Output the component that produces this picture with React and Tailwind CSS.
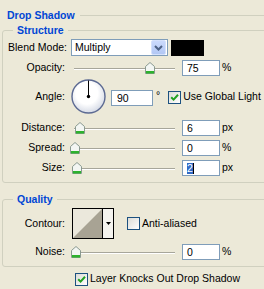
import React from "react";

const Thumb = ({ left }) => (
  <svg
    width="10"
    height="12"
    viewBox="0 0 10 12"
    className="absolute top-[4px]"
    style={{ left }}
  >
    <path d="M0.5 4.5 L5 0.5 L9.5 4.5 V11.5 H0.5 Z" fill="#f3f6f3" stroke="#8a9a90" />
    <rect x="1" y="9" width="8" height="2.5" fill="#2db22d" />
  </svg>
);

const Slider = ({ offset }) => (
  <div className="relative w-[110px] h-[20px] ml-[5px]">
    <div className="absolute left-[4px] w-[101px] top-[10px] h-[2px] border-t border-[#a7a69a] border-b border-b-white" />
    <Thumb left={offset} />
  </div>
);

const Field = ({ children, w = "w-[38px]", className = "" }) => (
  <div
    className={`${w} h-[16px] border border-[#7f9db9] bg-white pl-[4px] leading-[14px] flex items-center ${className}`}
  >
    {children}
  </div>
);

const Check = ({ checked }) => (
  <span className="w-[13px] h-[13px] shrink-0 border border-[#1c5180] bg-linear-to-br from-[#dcdcd7] to-white flex items-center justify-center">
    {checked && (
      <svg width="9" height="9" viewBox="0 0 9 9">
        <path d="M1.2 4.2 L3.6 6.6 L8 1.8" stroke="#21a121" strokeWidth="2" fill="none" />
      </svg>
    )}
  </span>
);

const SliderRow = ({ label, offset, value, unit }) => (
  <div className="flex items-center h-[20px]">
    <span className="w-[62px] text-right">{label}</span>
    <Slider offset={offset} />
    <Field className="ml-[2px]">{value}</Field>
    <span className="ml-[2px]">{unit}</span>
  </div>
);

export default function App() {
  return (
    <div className="w-[264px] h-[289px] overflow-hidden bg-[#ece9d8] text-black text-[10.5px] font-['Liberation_Sans',Arial,sans-serif]">
      {/* header */}
      <div className="flex items-center h-[13px] mt-[9px] pl-[7px]">
        <span className="font-bold text-[#0046d5]">Drop Shadow</span>
        <div className="flex-1 h-px bg-[#d0d0bf] ml-[5px]" />
      </div>

      {/* Structure */}
      <fieldset className="ml-[2px] mt-[2px] w-[290px] border border-[#d0d0bf] rounded-[3px] pb-[4px]">
        <legend className="ml-[10px] px-[4px] font-bold text-[#0046d5] leading-[13px]">
          Structure
        </legend>

        <div className="flex items-center h-[17px] mt-[2px]">
          <span className="w-[64px] text-right">Blend Mode:</span>
          <div className="ml-[4px] w-[97px] h-[17px] border border-[#7f9db9] bg-white flex items-center justify-between pl-[3px] pr-px">
            <span>Multiply</span>
            <span className="w-[15px] h-[15px] rounded-[2px] border border-[#d5e1fc] bg-linear-to-b from-[#cbdafc] to-[#b2c7f4] flex items-center justify-center">
              <svg width="9" height="6" viewBox="0 0 9 6">
                <path d="M1 1 L4.5 4.5 L8 1" stroke="#4d6185" strokeWidth="2" fill="none" />
              </svg>
            </span>
          </div>
          <div className="ml-[3px] w-[33px] h-[16px] bg-black" />
        </div>

        <div className="mt-[2px]">
          <SliderRow label="Opacity:" offset={75} value="75" unit="%" />
        </div>

        <div className="flex items-center h-[35px] mt-[1px]">
          <span className="w-[62px] text-right">Angle:</span>
          <svg width="35" height="35" viewBox="0 0 35 35" className="ml-[6px]">
            <defs>
              <radialGradient id="dial" cx="0.45" cy="0.4" r="0.6">
                <stop offset="0.55" stopColor="#ffffff" />
                <stop offset="1" stopColor="#d6dbe6" />
              </radialGradient>
            </defs>
            <circle cx="17.5" cy="17.5" r="16.5" fill="url(#dial)" stroke="#5c6a92" strokeWidth="1.4" />
            <line x1="17.5" y1="17.5" x2="17.5" y2="1.5" stroke="#000" strokeWidth="1" />
            <circle cx="17.5" cy="17.5" r="1.7" fill="#000" />
          </svg>
          <Field w="w-[42px]" className="ml-[5px] mt-[3px] pl-[5px]">90</Field>
          <span className="ml-[3px] self-start mt-[9px]">°</span>
          <span className="ml-[8px] mt-[1px] flex items-center">
            <Check checked />
            <span className="ml-[2px]">Use Global Light</span>
          </span>
        </div>

        <div className="mt-[4px]">
          <SliderRow label="Distance:" offset={5} value="6" unit="px" />
          <SliderRow label="Spread:" offset={0} value="0" unit="%" />
          <div className="flex items-center h-[20px]">
            <span className="w-[62px] text-right">Size:</span>
            <Slider offset={2} />
            <Field className="ml-[2px]">
              <span className="bg-[#316ac5] text-white leading-[11px]">2</span>
              <span className="w-px h-[11px] bg-black" />
            </Field>
            <span className="ml-[2px]">px</span>
          </div>
        </div>
      </fieldset>

      {/* Quality */}
      <fieldset className="ml-[2px] mt-[10px] w-[290px] border border-[#d0d0bf] rounded-[3px] pb-[4px]">
        <legend className="ml-[10px] px-[4px] font-bold text-[#0046d5] leading-[13px]">
          Quality
        </legend>

        <div className="flex items-center h-[31px] mt-[2px]">
          <span className="w-[62px] text-right">Contour:</span>
          <div className="ml-[7px] flex h-[31px] border border-black">
            <svg width="29" height="29" viewBox="0 0 29 29" className="bg-[#ebe8dc]">
              <polygon points="0,29 29,0 29,29" fill="#a8a394" />
            </svg>
            <div className="w-[11px] border-l border-black bg-[#f4f3ee] flex items-center justify-center">
              <svg width="5" height="3" viewBox="0 0 5 3">
                <polygon points="0,0 5,0 2.5,3" fill="#000" />
              </svg>
            </div>
          </div>
          <span className="ml-[13px] flex items-center">
            <Check />
            <span className="ml-[2px]">Anti-aliased</span>
          </span>
        </div>

        <div className="mt-[3px]">
          <SliderRow label="Noise:" offset={1} value="0" unit="%" />
        </div>
      </fieldset>

      <div className="flex items-center h-[16px] mt-[4px] pl-[75px]">
        <Check checked />
        <span className="ml-[2px]">Layer Knocks Out Drop Shadow</span>
      </div>
    </div>
  );
}
